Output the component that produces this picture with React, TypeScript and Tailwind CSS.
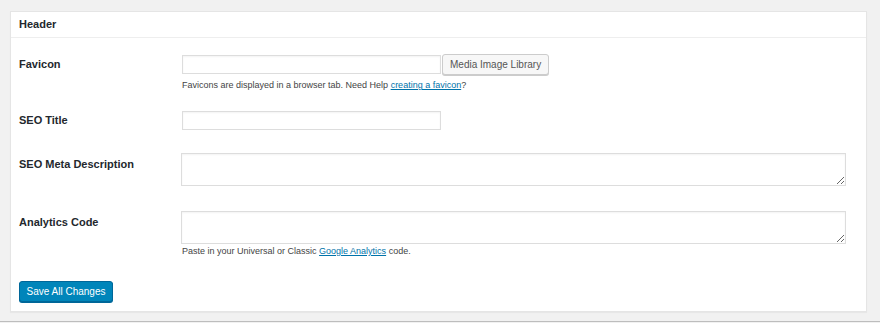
import React from "react";

const font = { fontFamily: '"Liberation Sans", Arial, sans-serif' };

function Label({ children, extra = "" }: { children: React.ReactNode; extra?: string }) {
  return (
    <div className={`w-[163px] shrink-0 text-[11px] leading-[19px] font-bold text-[#23282d] ${extra}`}>
      {children}
    </div>
  );
}

const field =
  "border border-[#dddddd] bg-white shadow-[inset_0_1px_2px_rgba(0,0,0,0.05)] outline-none";

export default function App() {
  return (
    <div className="flex h-[323px] w-[880px] flex-col bg-[#f1f1f1]" style={font}>
      <div className="ml-[10px] mt-[11px] w-[857px] border border-[#e5e5e5] bg-white shadow-[0_1px_1px_rgba(0,0,0,0.04)]">
        <div className="flex h-[26px] items-center border-b border-[#eeeeee] pl-[8px] text-[11px] font-bold text-[#23282d]">
          Header
        </div>
        <div className="flex flex-col pb-[9px] pl-[8px] pt-[16px]">
          {/* Favicon */}
          <div className="flex items-start">
            <Label extra="mt-[1px]">Favicon</Label>
            <div className="flex flex-col">
              <div className="flex h-[21px] items-center">
                <input className={`block h-[19px] w-[259px] ${field}`} />
                <button className="ml-[1px] block h-[21px] rounded-[3px] border border-[#cccccc] bg-[#f7f7f7] px-[7px] text-[10px] leading-[19px] text-[#555555] shadow-[0_1px_0_#cccccc]">
                  Media Image Library
                </button>
              </div>
              <div className="mt-[4px] text-[9px] leading-[12px] text-[#444444]">
                Favicons are displayed in a browser tab. Need Help{" "}
                <span className="text-[#0073aa] underline">creating a favicon</span>?
              </div>
            </div>
          </div>

          {/* SEO Title */}
          <div className="mt-[20px] flex items-start">
            <Label>SEO Title</Label>
            <input className={`block h-[19px] w-[259px] ${field}`} />
          </div>

          {/* SEO Meta Description */}
          <div className="mt-[23px] flex items-start">
            <Label extra="pt-[2px]">SEO Meta Description</Label>
            <textarea className={`-ml-[1px] block h-[33px] w-[665px] ${field}`} />
          </div>

          {/* Analytics Code */}
          <div className="mt-[25px] flex items-start">
            <Label extra="pt-[2px]">Analytics Code</Label>
            <div className="flex flex-col">
              <textarea className={`-ml-[1px] block h-[33px] w-[665px] ${field}`} />
              <div className="mt-[1px] text-[9px] leading-[12px] text-[#444444]">
                Paste in your Universal or Classic{" "}
                <span className="text-[#0073aa] underline">Google Analytics</span> code.
              </div>
            </div>
          </div>

          <div className="mt-[24px] flex">
            <button className="block h-[21px] w-[94px] rounded-[3px] border border-[#006799] bg-[#0085ba] text-[10px] leading-[19px] text-white shadow-[0_1px_0_#006799]">
              Save All Changes
            </button>
          </div>
        </div>
      </div>
      <div className="mt-auto mb-[1px] h-[1px] w-full bg-[#bdbdbd]" />
    </div>
  );
}
